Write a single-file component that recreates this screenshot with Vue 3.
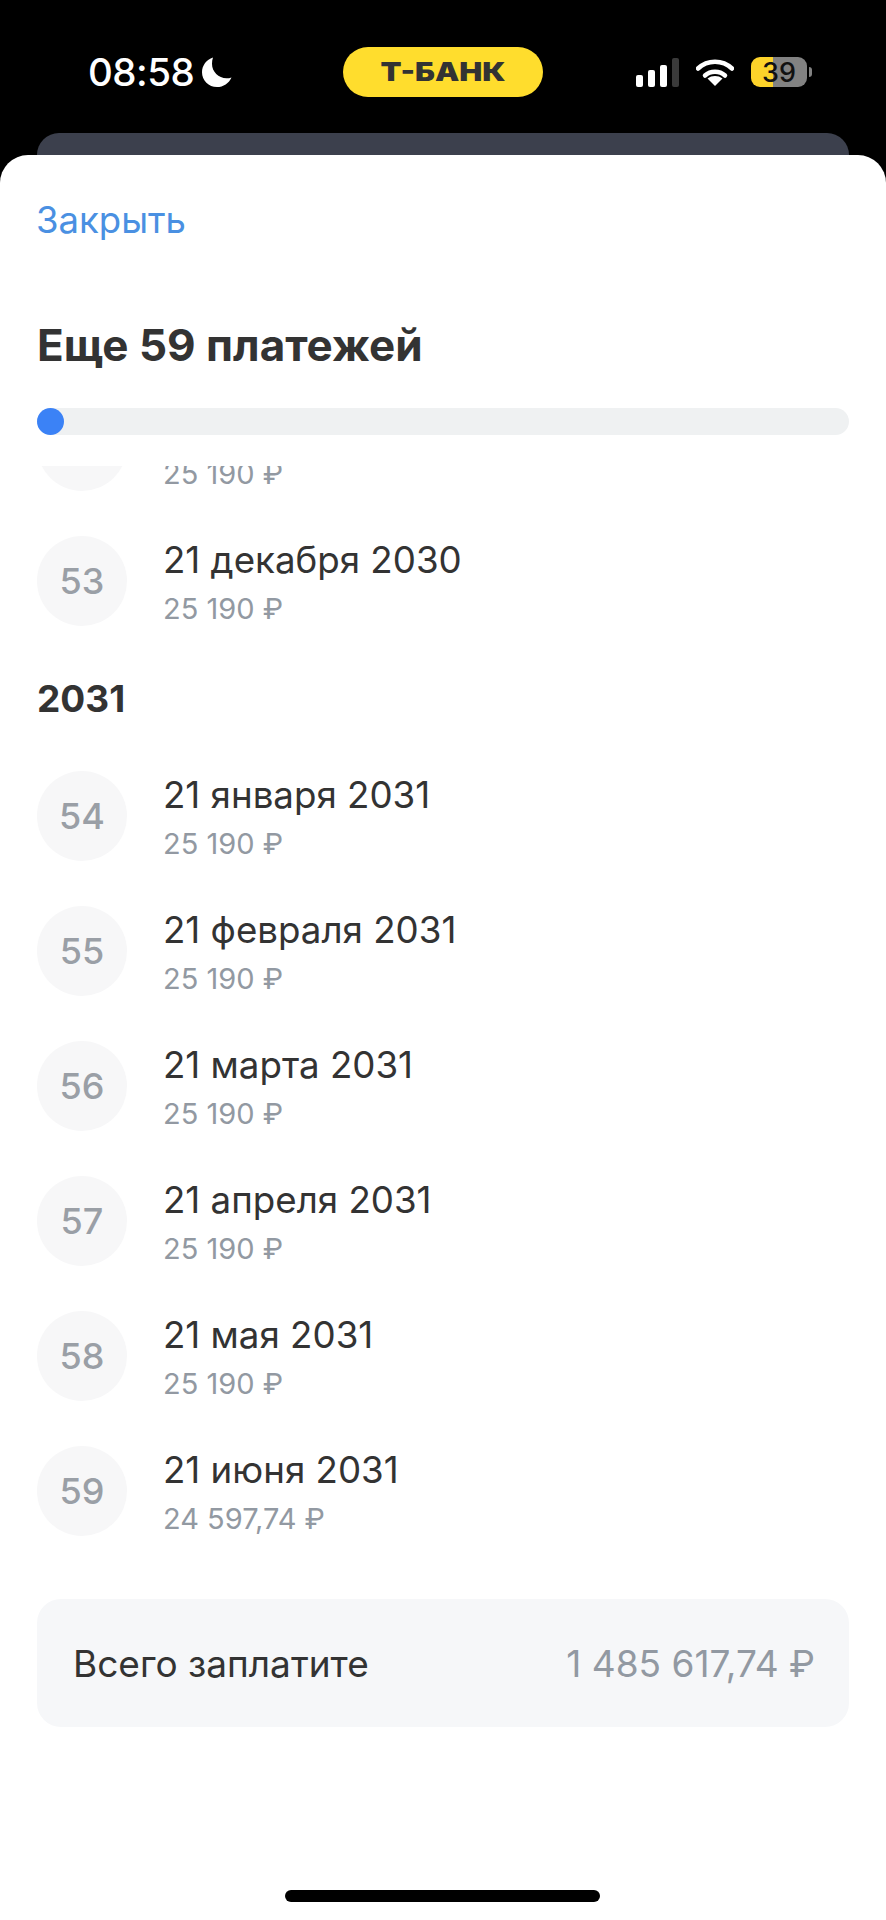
<script setup>
const rows = [
  { n: 52, date: '21 ноября 2030', sum: '25 190 ₽' },
  { n: 53, date: '21 декабря 2030', sum: '25 190 ₽' },
]
const rows2031 = [
  { n: 54, date: '21 января 2031', sum: '25 190 ₽' },
  { n: 55, date: '21 февраля 2031', sum: '25 190 ₽' },
  { n: 56, date: '21 марта 2031', sum: '25 190 ₽' },
  { n: 57, date: '21 апреля 2031', sum: '25 190 ₽' },
  { n: 58, date: '21 мая 2031', sum: '25 190 ₽' },
  { n: 59, date: '21 июня 2031', sum: '24 597,74 ₽' },
]
</script>

<template>
  <div class="page">
    <div class="status">
      <div class="left">
        <span class="time">08:58</span>
        <svg class="moon" width="30" height="30" viewBox="0 0 30 30">
          <path d="M11 0.500C4.500 2.500 0 8.500 0 15.200 0 23.500 6.700 30 15 30c6.300 0 12-3.800 14.500-9.600-1.600 .6-3.300 .9-5 .9C16.500 21.300 10 14.800 10 6.800c0-2.200 .3-4.300 1-6.300z" fill="#fff"/>
        </svg>
      </div>
      <div class="pill"><span>Т-БАНК</span></div>
      <div class="right">
        <svg width="43" height="29" viewBox="0 0 43 29">
          <rect x="0" y="17" width="7" height="12" rx="2" fill="#fff"/>
          <rect x="12" y="12" width="7" height="17" rx="2" fill="#fff"/>
          <rect x="24" y="7" width="7" height="22" rx="2" fill="#fff"/>
          <rect x="36" y="0" width="7" height="29" rx="2" fill="#3a3a3a"/>
        </svg>
        <svg class="wifi" width="38" height="28" viewBox="0 0 38 28">
          <path d="M2 10.500C11.500 1.500 26.500 1.500 36 10.500" fill="none" stroke="#fff" stroke-width="4.500" stroke-linecap="round"/>
          <path d="M9 17.500C14.500 12.500 23.500 12.500 29 17.500" fill="none" stroke="#fff" stroke-width="4.500" stroke-linecap="round"/>
          <path d="M19 28l-7.500-7.500c4.300-3.300 10.700-3.300 15 0z" fill="#fff"/>
        </svg>
        <div class="battery"><span>39</span></div>
        <div class="nub"></div>
      </div>
    </div>
    <div class="back-card"></div>
    <div class="sheet">
      <div class="close">Закрыть</div>
      <h1 class="title">Еще 59 платежей</h1>
      <div class="track"><div class="dot"></div></div>
      <div class="list">
        <div class="rows first">
          <div v-for="r in rows" :key="r.n" class="row">
            <div class="num">{{ r.n }}</div>
            <div class="info">
              <div class="date">{{ r.date }}</div>
              <div class="sum">{{ r.sum }}</div>
            </div>
          </div>
        </div>
        <div class="year">2031</div>
        <div class="rows">
          <div v-for="r in rows2031" :key="r.n" class="row">
            <div class="num">{{ r.n }}</div>
            <div class="info">
              <div class="date">{{ r.date }}</div>
              <div class="sum">{{ r.sum }}</div>
            </div>
          </div>
        </div>
        <div class="total">
          <span>Всего заплатите</span>
          <span class="total-sum">1 485 617,74 ₽</span>
        </div>
      </div>
      <div class="home"></div>
    </div>
  </div>
</template>

<style>
html, body {
  margin: 0;
  background: #000;
}
</style>

<style scoped>
.page {
  width: 886px;
  height: 1920px;
  overflow: hidden;
  background: #000;
  font-family: Inter, "Liberation Sans", sans-serif;
}
.status {
  height: 86px;
  padding-top: 47px;
  display: flex;
  align-items: flex-start;
}
.left {
  width: 343px;
  height: 50px;
  padding-left: 88px;
  box-sizing: border-box;
  display: flex;
  align-items: center;
  gap: 8px;
}
.time {
  color: #fff;
  font-size: 38.500px;
  font-weight: 500;
  line-height: 44px;
  letter-spacing: -0.5px;
}
.moon {
  flex: none;
}
.pill {
  width: 200px;
  height: 50px;
  border-radius: 25px;
  background: #ffdd2d;
  color: #333;
  font-size: 26px;
  font-weight: 900;
  line-height: 50px;
  text-align: center;
}
.pill span {
  display: inline-block;
  transform: scaleX(1.18);
}
.right {
  margin-left: 93px;
  height: 50px;
  display: flex;
  align-items: center;
}
.wifi {
  margin-left: 17px;
}
.battery {
  margin-left: 17px;
  width: 56px;
  height: 30px;
  border-radius: 9px;
  background: linear-gradient(90deg, #fdd32a 39%, #828282 39%);
  display: flex;
  align-items: center;
  justify-content: center;
  color: #111;
  font-size: 27px;
  font-weight: 500;
}
.nub {
  width: 3px;
  height: 10px;
  margin-left: 2px;
  border-radius: 0 3px 3px 0;
  background: #828282;
}
.back-card {
  height: 22px;
  margin: 0 37px;
  border-radius: 24px 24px 0 0;
  background: #3c404d;
}
.sheet {
  height: 1765px;
  background: #fff;
  border-radius: 28px 28px 0 0;
  padding: 0 37px;
  box-sizing: border-box;
  display: flex;
  flex-direction: column;
  position: relative;
}
.close {
  margin-top: 42px;
  margin-left: -1px;
  color: #4a90e2;
  font-size: 36.500px;
  line-height: 46px;
}
.title {
  margin: 76px 0 0;
  color: #333;
  font-size: 44px;
  font-weight: 700;
  line-height: 52px;
}
.track {
  margin-top: 37px;
  height: 27px;
  border-radius: 14px;
  background: #eff1f2;
}
.dot {
  width: 27px;
  height: 27px;
  border-radius: 50%;
  background: #3b82f6;
}
.list {
  margin-top: 31px;
  height: 1300px;
  overflow: hidden;
}
.rows {
  display: flex;
  flex-direction: column;
  gap: 45px;
}
.rows.first {
  margin-top: -65px;
}
.row {
  display: flex;
  height: 90px;
  gap: 36px;
}
.num {
  width: 90px;
  height: 90px;
  flex: none;
  border-radius: 50%;
  background: #f7f7f8;
  color: #9a9fa6;
  font-size: 36px;
  font-weight: 500;
  line-height: 90px;
  text-align: center;
}
.date {
  color: #333;
  font-size: 36.700px;
  line-height: 48px;
}
.sum {
  margin-top: 7px;
  color: #9299a2;
  font-size: 29px;
  line-height: 35px;
}
.year {
  margin-top: 51px;
  margin-bottom: 50px;
  color: #333;
  font-size: 37px;
  font-weight: 700;
  line-height: 44px;
}
.total {
  margin-top: 63px;
  height: 128px;
  border-radius: 24px;
  background: #f6f7f9;
  padding: 0 34px 0 36px;
  display: flex;
  align-items: center;
  justify-content: space-between;
  color: #333;
  font-size: 37px;
}
.total-sum {
  color: #9299a2;
  font-size: 37px;
}
.home {
  position: absolute;
  left: 285px;
  bottom: 18px;
  width: 315px;
  height: 12px;
  border-radius: 6px;
  background: #000;
}
</style>
